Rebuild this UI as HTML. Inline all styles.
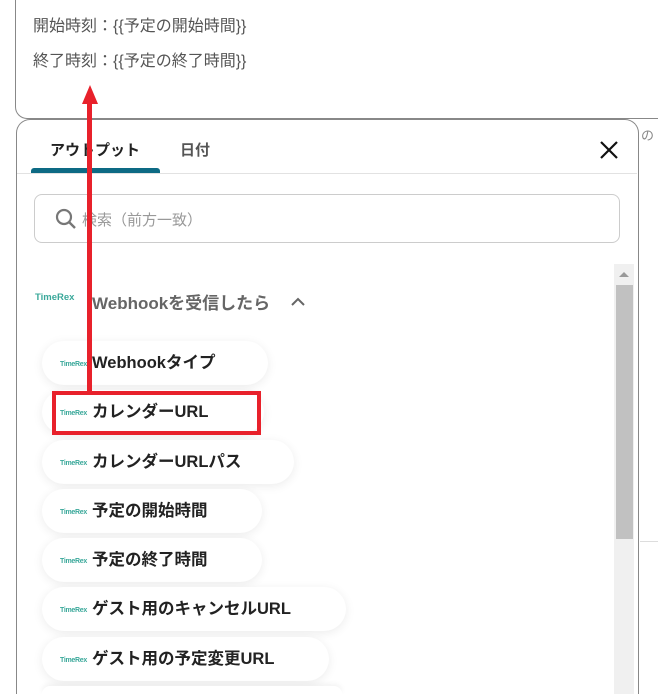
<!DOCTYPE html>
<html><head><meta charset="utf-8"><style>
*{margin:0;padding:0;box-sizing:border-box}
html{width:658px;height:694px;overflow:hidden}
body{width:658px;height:694px;overflow:hidden;background:#fff;font-family:"Liberation Sans","Noto Sans CJK JP",sans-serif;position:relative}
.top{position:absolute;left:15px;top:-20px;width:643px;height:139px;border:1.5px solid #888;border-right:none;border-radius:12px 0 0 12px}
.tl{position:absolute;left:33px;font-size:16px;color:#555}
.panel{position:absolute;left:16px;top:119px;width:623px;height:575px;border:1.5px solid #888;border-bottom:none;border-radius:14px 14px 0 0;background:#fff}
.tab{position:absolute;top:139px;font-size:15px;font-weight:bold}
.pill{position:absolute;left:42px;height:44px;border-radius:22px;background:#fff;box-shadow:0 2px 10px rgba(0,0,0,.08);font-size:16.5px;font-weight:bold;color:#222;line-height:44px;padding-left:50px}
.lg{position:absolute;left:18px;top:2px;font-size:7px;color:#3aa89a;font-weight:bold;letter-spacing:-.3px}
</style></head><body>
<div class="top"></div>
<div class="tl" style="top:12px">開始時刻：{{予定の開始時間}}</div>
<div class="tl" style="top:47px">終了時刻：{{予定の終了時間}}</div>
<div style="position:absolute;left:641px;top:125px;font-size:13px;color:#888">の</div>
<div style="position:absolute;left:640px;top:541px;width:18px;height:1px;background:#ddd"></div>
<div class="panel"></div>
<div class="tab" style="left:50px;color:#222">アウトプット</div>
<div class="tab" style="left:180px;color:#555">日付</div>
<div style="position:absolute;left:31px;top:168px;width:129px;height:5px;background:#0d6a84;border-radius:3px 3px 0 0"></div>
<div style="position:absolute;left:17px;top:173px;width:620px;height:1px;background:#e2e2e2"></div>
<svg style="position:absolute;left:598px;top:139px" width="22" height="22"><path d="M3 3L19 19M19 3L3 19" stroke="#111" stroke-width="2.2"/></svg>
<div style="position:absolute;left:34px;top:194px;width:586px;height:49px;border:1px solid #ccc;border-radius:8px"></div>
<svg style="position:absolute;left:54px;top:207px" width="24" height="24"><circle cx="10" cy="10" r="7" fill="none" stroke="#777" stroke-width="2.2"/><path d="M15 15L21 21" stroke="#777" stroke-width="2.4"/></svg>
<div style="position:absolute;left:82px;top:209px;font-size:15px;color:#999">検索（前方一致）</div>
<div style="position:absolute;left:35px;top:292px;font-size:9.5px;font-weight:bold;color:#3aa89a">TimeRex</div>
<div style="position:absolute;left:92px;top:289px;font-size:17px;font-weight:bold;color:#666">Webhookを受信したら</div>
<svg style="position:absolute;left:290px;top:296px" width="16" height="12"><path d="M2 9L8 3L14 9" fill="none" stroke="#666" stroke-width="2"/></svg>
<div class="pill" style="top:341px;width:226px"><span class="lg" style="line-height:44px">TimeRex</span>Webhookタイプ</div>
<div class="pill" style="top:390px;width:222px"><span class="lg" style="line-height:44px">TimeRex</span>カレンダーURL</div>
<div class="pill" style="top:440px;width:252px"><span class="lg" style="line-height:44px">TimeRex</span>カレンダーURLパス</div>
<div class="pill" style="top:489px;width:220px"><span class="lg" style="line-height:44px">TimeRex</span>予定の開始時間</div>
<div class="pill" style="top:538px;width:220px"><span class="lg" style="line-height:44px">TimeRex</span>予定の終了時間</div>
<div class="pill" style="top:587px;width:304px"><span class="lg" style="line-height:44px">TimeRex</span>ゲスト用のキャンセルURL</div>
<div class="pill" style="top:637px;width:287px"><span class="lg" style="line-height:44px">TimeRex</span>ゲスト用の予定変更URL</div>
<div style="position:absolute;left:42px;top:686px;width:300px;height:8px;border-radius:22px 22px 0 0;background:#fff;box-shadow:0 -2px 6px rgba(0,0,0,.06)"></div>
<div style="position:absolute;left:614px;top:264px;width:20px;height:430px;background:#f0f0f0"></div>
<div style="position:absolute;left:616px;top:285px;width:17px;height:254px;background:#c1c1c1"></div>
<svg style="position:absolute;left:618px;top:270px" width="12" height="8"><path d="M1 7L6 2L11 7Z" fill="#999"/></svg>
<div style="position:absolute;left:52px;top:391px;width:209px;height:44px;border:4px solid #e8212b"></div>
<div style="position:absolute;left:87px;top:100px;width:5px;height:292px;background:#e8212b"></div>
<svg style="position:absolute;left:80px;top:84px" width="20" height="20"><path d="M10 1L18 20H2Z" fill="#e8212b"/></svg>
</body></html>
